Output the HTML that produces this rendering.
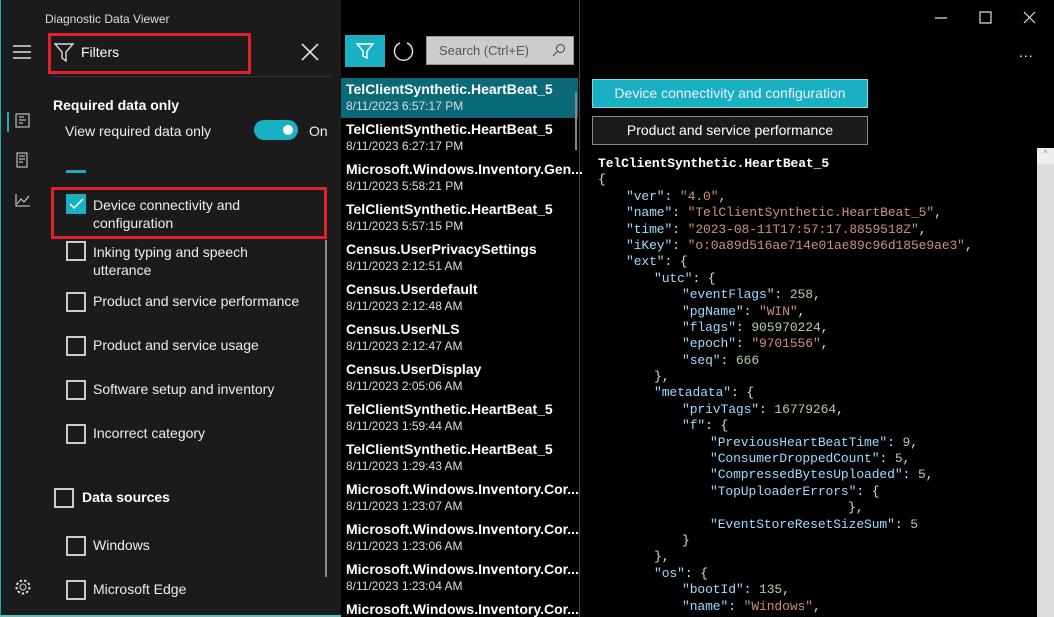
<!DOCTYPE html>
<html><head><meta charset="utf-8"><style>
*{margin:0;padding:0;box-sizing:border-box}
html,body{width:1054px;height:617px;overflow:hidden}
body{background:#000;font-family:"Liberation Sans",sans-serif;color:#fff;position:relative}
.a{position:absolute;white-space:nowrap}
#left{position:absolute;left:0;top:0;width:341px;height:617px;background:#1b1b1b;border-left:1px solid #2aa;border-bottom:2px solid #6bb}
.cb{position:absolute;width:20px;height:20px;border:2px solid #ccc}
.lt{font-size:14px;color:#eee}
.it{position:absolute;left:346px;width:230px;height:40px}
.it b{display:block;font-size:14px;margin-top:3px}
.it span{display:block;font-size:12px;color:#ddd;margin-top:2px}
#json{position:absolute;left:598px;top:156px;font-family:"Liberation Mono",monospace;font-size:13px;line-height:16.4px;white-space:pre;color:#ddd;letter-spacing:-0.1px}
#json div{height:16.4px}
.l1{padding-left:28px}.l2{padding-left:56px}.l3{padding-left:84px}.l4{padding-left:112px}
.k{color:#9cdcfe}.s{color:#ce9178}.n{color:#b5cea8}
</style></head><body>
<div id="left">
 <div class="a" style="left:44px;top:12px;font-size:12px;color:#ddd">Diagnostic Data Viewer</div>
 <svg class="a" style="left:12px;top:45px" width="18" height="14"><path d="M0 1h18M0 7h18M0 13h18" stroke="#ddd" stroke-width="1.5"/></svg>
 <div class="a" style="left:47px;top:33px;width:203px;height:41px;border:3px solid #e0202a"></div>
 <svg class="a" style="left:52px;top:41px" width="22" height="22"><path d="M2 3h18l-7 8v9l-4-3v-6z" fill="none" stroke="#ddd" stroke-width="1.4"/></svg>
 <div class="a" style="left:80px;top:44px;font-size:14px">Filters</div>
 <svg class="a" style="left:300px;top:43px" width="18" height="18"><path d="M1 1l16 16M17 1L1 17" stroke="#ddd" stroke-width="1.6"/></svg>
 <div class="a" style="left:52px;top:76px;width:278px;height:1px;background:#333"></div>
 <div class="a" style="left:6px;top:112px;width:2px;height:20px;background:#2ab"></div>
 <svg class="a" style="left:14px;top:113px" width="16" height="16"><rect x="1" y="1" width="13" height="13" fill="none" stroke="#ddd"/><path d="M4 4h5M4 7h7M4 10h4" stroke="#ddd"/></svg>
 <svg class="a" style="left:15px;top:152px" width="16" height="16"><path d="M1 1h10v14H1zM3 4h6M3 7h6M3 10h4" fill="none" stroke="#ddd"/></svg>
 <svg class="a" style="left:14px;top:193px" width="16" height="14"><path d="M1 1v12h14M2 11l4-5 3 3 5-6" fill="none" stroke="#ddd"/></svg>
 <svg class="a" style="left:13px;top:578px" width="18" height="18"><circle cx="9" cy="9" r="3" fill="none" stroke="#ddd"/><circle cx="9" cy="9" r="6.5" fill="none" stroke="#ddd" stroke-width="2" stroke-dasharray="2.5 2"/></svg>
 <div class="a" style="left:52px;top:97px;font-size:14px;font-weight:bold">Required data only</div>
 <div class="a lt" style="left:64px;top:123px">View required data only</div>
 <div class="a" style="left:253px;top:120px;width:44px;height:20px;border-radius:10px;background:#1ab0c4"></div>
 <div class="a" style="left:282px;top:125px;width:10px;height:10px;border-radius:5px;background:#fff"></div>
 <div class="a lt" style="left:308px;top:123px">On</div>
 <div class="a" style="left:65px;top:170px;width:20px;height:3px;background:#2ab"></div>
 <div class="a" style="left:50px;top:187px;width:276px;height:52px;border:3px solid #e0202a"></div>
 <div class="a" style="left:65px;top:194px;width:20px;height:20px;background:#1ab0c4"></div>
 <svg class="a" style="left:65px;top:194px" width="20" height="20"><path d="M4 10l4 4 9-9" fill="none" stroke="#fff" stroke-width="1.5"/></svg>
 <div class="a lt" style="left:92px;top:196px;line-height:18px">Device connectivity and<br>configuration</div>
 <div class="cb" style="left:65px;top:241px"></div><div class="a lt" style="left:92px;top:243px;line-height:18px">Inking typing and speech<br>utterance</div>
 <div class="cb" style="left:65px;top:292px"></div><div class="a lt" style="left:92px;top:293px">Product and service performance</div>
 <div class="cb" style="left:65px;top:336px"></div><div class="a lt" style="left:92px;top:337px">Product and service usage</div>
 <div class="cb" style="left:65px;top:380px"></div><div class="a lt" style="left:92px;top:381px">Software setup and inventory</div>
 <div class="cb" style="left:65px;top:424px"></div><div class="a lt" style="left:92px;top:425px">Incorrect category</div>
 <div class="cb" style="left:53px;top:488px"></div><div class="a" style="left:81px;top:489px;font-size:14px;font-weight:bold">Data sources</div>
 <div class="cb" style="left:65px;top:536px"></div><div class="a lt" style="left:92px;top:537px">Windows</div>
 <div class="cb" style="left:65px;top:580px"></div><div class="a lt" style="left:92px;top:581px">Microsoft Edge</div>
 <div class="a" style="left:324px;top:240px;width:2px;height:337px;background:#888"></div>
</div>
<div class="a" style="left:345px;top:35px;width:40px;height:32px;background:#1ab0c4"></div>
<svg class="a" style="left:355px;top:41px" width="20" height="20"><path d="M2 3h16l-6 7v7l-4-2v-5z" fill="none" stroke="#fff" stroke-width="1.4"/></svg>
<svg class="a" style="left:393px;top:40px" width="22" height="22"><path d="M7 3A9 9 0 1 0 14 3" fill="none" stroke="#ddd" stroke-width="1.5"/></svg>
<div class="a" style="left:426px;top:36px;width:148px;height:29px;background:#ccc;border:1px solid #999"></div>
<div class="a" style="left:439px;top:43px;font-size:13px;color:#555">Search (Ctrl+E)</div>
<svg class="a" style="left:552px;top:43px" width="14" height="14"><circle cx="8.5" cy="5.5" r="4" fill="none" stroke="#444"/><path d="M5.5 8.5L1 13" stroke="#444"/></svg>
<div class="a" style="left:341px;top:78px;width:237px;height:40px;background:#0b6a77"></div>
<div class="a" style="left:575px;top:92px;width:2px;height:58px;background:#888"></div>
<div class="a" style="left:579px;top:0;width:1px;height:617px;background:#444"></div>
<div class="it" style="top:78px"><b>TelClientSynthetic.HeartBeat_5</b><span>8/11/2023 6:57:17 PM</span></div>
<div class="it" style="top:118px"><b>TelClientSynthetic.HeartBeat_5</b><span>8/11/2023 6:27:17 PM</span></div>
<div class="it" style="top:158px"><b>Microsoft.Windows.Inventory.Gen...</b><span>8/11/2023 5:58:21 PM</span></div>
<div class="it" style="top:198px"><b>TelClientSynthetic.HeartBeat_5</b><span>8/11/2023 5:57:15 PM</span></div>
<div class="it" style="top:238px"><b>Census.UserPrivacySettings</b><span>8/11/2023 2:12:51 AM</span></div>
<div class="it" style="top:278px"><b>Census.Userdefault</b><span>8/11/2023 2:12:48 AM</span></div>
<div class="it" style="top:318px"><b>Census.UserNLS</b><span>8/11/2023 2:12:47 AM</span></div>
<div class="it" style="top:358px"><b>Census.UserDisplay</b><span>8/11/2023 2:05:06 AM</span></div>
<div class="it" style="top:398px"><b>TelClientSynthetic.HeartBeat_5</b><span>8/11/2023 1:59:44 AM</span></div>
<div class="it" style="top:438px"><b>TelClientSynthetic.HeartBeat_5</b><span>8/11/2023 1:29:43 AM</span></div>
<div class="it" style="top:478px"><b>Microsoft.Windows.Inventory.Cor...</b><span>8/11/2023 1:23:07 AM</span></div>
<div class="it" style="top:518px"><b>Microsoft.Windows.Inventory.Cor...</b><span>8/11/2023 1:23:06 AM</span></div>
<div class="it" style="top:558px"><b>Microsoft.Windows.Inventory.Cor...</b><span>8/11/2023 1:23:04 AM</span></div>
<div class="it" style="top:598px"><b>Microsoft.Windows.Inventory.Cor...</b></div>
<svg class="a" style="left:930px;top:10px" width="110" height="16"><path d="M5 8h12M50 2h11v11H50zM94 2l11 11M105 2L94 13" fill="none" stroke="#ddd" stroke-width="1.2"/></svg>
<div class="a" style="left:1019px;top:44px;font-size:14px;letter-spacing:1px">...</div>
<div class="a" style="left:592px;top:79px;width:276px;height:29px;background:#1ab0c4;border:1px solid #7dd;font-size:14px;text-align:center;line-height:27px;color:#eef">Device connectivity and configuration</div>
<div class="a" style="left:592px;top:116px;width:276px;height:29px;background:#1b1b1b;border:1px solid #888;font-size:14px;text-align:center;line-height:27px">Product and service performance</div>
<div class="a" style="left:1037px;top:148px;width:17px;height:469px;background:#ddd"></div>
<div class="a" style="left:1037px;top:148px;width:17px;height:16px;background:#eee;font-size:9px;color:#888;text-align:center">^</div>
<div id="json"><div><b style="color:#fff">TelClientSynthetic.HeartBeat_5</b></div><div>{</div><div class="l1"><span class="k">"ver"</span>: <span class="s">"4.0"</span>,</div><div class="l1"><span class="k">"name"</span>: <span class="s">"TelClientSynthetic.HeartBeat_5"</span>,</div><div class="l1"><span class="k">"time"</span>: <span class="s">"2023-08-11T17:57:17.8859518Z"</span>,</div><div class="l1"><span class="k">"iKey"</span>: <span class="s">"o:0a89d516ae714e01ae89c96d185e9ae3"</span>,</div><div class="l1"><span class="k">"ext"</span>: {</div><div class="l2"><span class="k">"utc"</span>: {</div><div class="l3"><span class="k">"eventFlags"</span>: <span class="n">258</span>,</div><div class="l3"><span class="k">"pgName"</span>: <span class="s">"WIN"</span>,</div><div class="l3"><span class="k">"flags"</span>: <span class="n">905970224</span>,</div><div class="l3"><span class="k">"epoch"</span>: <span class="s">"9701556"</span>,</div><div class="l3"><span class="k">"seq"</span>: <span class="n">666</span></div><div class="l2">},</div><div class="l2"><span class="k">"metadata"</span>: {</div><div class="l3"><span class="k">"privTags"</span>: <span class="n">16779264</span>,</div><div class="l3"><span class="k">"f"</span>: {</div><div class="l4"><span class="k">"PreviousHeartBeatTime"</span>: <span class="n">9</span>,</div><div class="l4"><span class="k">"ConsumerDroppedCount"</span>: <span class="n">5</span>,</div><div class="l4"><span class="k">"CompressedBytesUploaded"</span>: <span class="n">5</span>,</div><div class="l4"><span class="k">"TopUploaderErrors"</span>: {</div><div style="padding-left:250px">},</div><div class="l4"><span class="k">"EventStoreResetSizeSum"</span>: <span class="n">5</span></div><div class="l3">}</div><div class="l2">},</div><div class="l2"><span class="k">"os"</span>: {</div><div class="l3"><span class="k">"bootId"</span>: <span class="n">135</span>,</div><div class="l3"><span class="k">"name"</span>: <span class="s">"Windows"</span>,</div></div>
</body></html>
